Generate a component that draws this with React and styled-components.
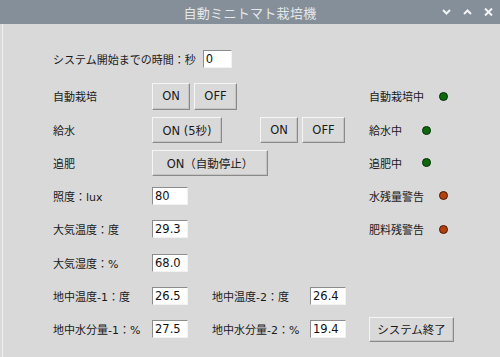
import React from "react";
import styled, { createGlobalStyle } from "styled-components";

const GlobalStyle = createGlobalStyle`
  html, body {
    margin: 0;
    padding: 0;
    background: #d9d9d9;
  }
  body {
    font-family: "DejaVu Sans", "Noto Sans CJK JP", sans-serif;
    color: #1a1a1a;
  }
`;

const Window = styled.div`
  width: 500px;
  height: 357px;
  display: flex;
  flex-direction: column;
  background: #d9d9d9;
  overflow: hidden;
`;

const TitleBar = styled.div`
  height: 24px;
  flex: none;
  background: #858f99;
  display: grid;
  grid-template-columns: 1fr auto 1fr;
  align-items: center;
`;

const Title = styled.div`
  grid-column: 2;
  color: #e4e7ea;
  font-family: "Noto Sans CJK JP", sans-serif;
  font-size: 13px;
  letter-spacing: 0.3px;
`;

const Controls = styled.div`
  grid-column: 3;
  justify-self: end;
  display: flex;
  align-items: center;
  gap: 12px;
  padding-right: 7px;

  svg {
    display: block;
  }
`;

const Body = styled.div`
  flex: 1;
  margin-left: 2px;
  border-left: 1px solid #efefef;
  padding: 16px 0 0 50px;
  display: grid;
  grid-template-columns: 99px 60px 48px 50px 59px 1fr;
  grid-template-rows: 38px 36px 32px 33px 33px 34px 34px 32px 34px;
  align-items: center;
  align-content: start;
`;

const Label = styled.span`
  grid-column: ${(p) => p.$col || 1} / span ${(p) => p.$span || 1};
  font-size: 11px;
  white-space: nowrap;
`;

const Inline = styled.div`
  grid-column: ${(p) => p.$col || 1} / span ${(p) => p.$span || 1};
  display: flex;
  align-items: center;
  gap: ${(p) => p.$gap || 4}px;
`;

const Entry = styled.input`
  grid-column: ${(p) => p.$col || 2};
  width: ${(p) => p.$w || 36}px;
  height: 18px;
  box-sizing: border-box;
  margin: 0;
  padding: 0 2px;
  background: #fff;
  border: 1px solid;
  border-color: #8c8c8c #f2f2f2 #f2f2f2 #8c8c8c;
  font-family: "DejaVu Sans", sans-serif;
  font-size: 11.5px;
  color: #111;
  outline: none;
`;

const Button = styled.button`
  grid-column: ${(p) => p.$col || 2} / span ${(p) => p.$span || 1};
  justify-self: start;
  width: ${(p) => p.$w}px;
  height: ${(p) => p.$h || 26}px;
  box-sizing: border-box;
  margin: 0;
  padding: 0;
  background: #d9d9d9;
  border: 1px solid;
  border-color: #f5f5f5 #8a8a8a #8a8a8a #f5f5f5;
  box-shadow: inset -1px -1px 0 #c4c4c4;
  font-family: "DejaVu Sans", "Noto Sans CJK JP", sans-serif;
  font-size: 11.5px;
  color: #1a1a1a;
  white-space: nowrap;
`;

const Dot = styled.span`
  width: 9px;
  height: 9px;
  box-sizing: border-box;
  border-radius: 50%;
  background: ${(p) => (p.$warn ? "#b3400f" : "#0c6a0c")};
  border: 1px solid ${(p) => (p.$warn ? "#4a1800" : "#032e03")};
  margin-left: ${(p) => p.$ml || 0}px;
`;

const Status = ({ text, warn, ml }) => (
  <Inline $col={6} $gap={0}>
    <Label as="span">{text}</Label>
    <Dot $warn={warn} $ml={ml} />
  </Inline>
);

const Chevron = ({ up }) => (
  <svg width="9" height="6" viewBox="0 0 9 6">
    <path
      d={up ? "M1 5 L4.5 1.5 L8 5" : "M1 1 L4.5 4.5 L8 1"}
      fill="none"
      stroke="#f2f4f6"
      strokeWidth="2"
    />
  </svg>
);

const Close = () => (
  <svg width="9" height="8" viewBox="0 0 9 8">
    <path d="M1 0.5 L8 7.5 M8 0.5 L1 7.5" stroke="#f2f4f6" strokeWidth="2" />
  </svg>
);

const App = () => (
  <Window>
    <GlobalStyle />
    <TitleBar>
      <Title>自動ミニトマト栽培機</Title>
      <Controls>
        <Chevron />
        <Chevron up />
        <Close />
      </Controls>
    </TitleBar>
    <Body>
      <Inline $span={4} $gap={7}>
        <Label>システム開始までの時間：秒</Label>
        <Entry $w={29} readOnly value="0" />
      </Inline>

      <Label>自動栽培</Label>
      <Inline $col={2} $span={3} $gap={4}>
        <Button $w={38} $h={27}>ON</Button>
        <Button $w={43} $h={27}>OFF</Button>
      </Inline>
      <Status text="自動栽培中" ml={11} />

      <Label>給水</Label>
      <Button $col={2} $span={2} $w={70}>ON (5秒)</Button>
      <Inline $col={4} $span={2} $gap={4}>
        <Button $w={38}>ON</Button>
        <Button $w={43}>OFF</Button>
      </Inline>
      <Status text="給水中" ml={16} />

      <Label>追肥</Label>
      <Button $col={2} $span={3} $w={116}>ON（自動停止）</Button>
      <Status text="追肥中" ml={16} />

      <Label>照度：lux</Label>
      <Entry readOnly value="80" />
      <Status text="水残量警告" ml={11} warn />

      <Label>大気温度：度</Label>
      <Entry readOnly value="29.3" />
      <Status text="肥料残警告" ml={11} warn />

      <Label>大気湿度：%</Label>
      <Entry readOnly value="68.0" />

      <Label>地中温度-1：度</Label>
      <Entry readOnly value="26.5" />
      <Label $col={3} $span={2}>地中温度-2：度</Label>
      <Entry $col={5} readOnly value="26.4" />

      <Label>地中水分量-1：%</Label>
      <Entry readOnly value="27.5" />
      <Label $col={3} $span={2}>地中水分量-2：%</Label>
      <Entry $col={5} readOnly value="19.4" />
      <Button $col={6} $w={85} $h={25}>システム終了</Button>
    </Body>
  </Window>
);

export default App;
